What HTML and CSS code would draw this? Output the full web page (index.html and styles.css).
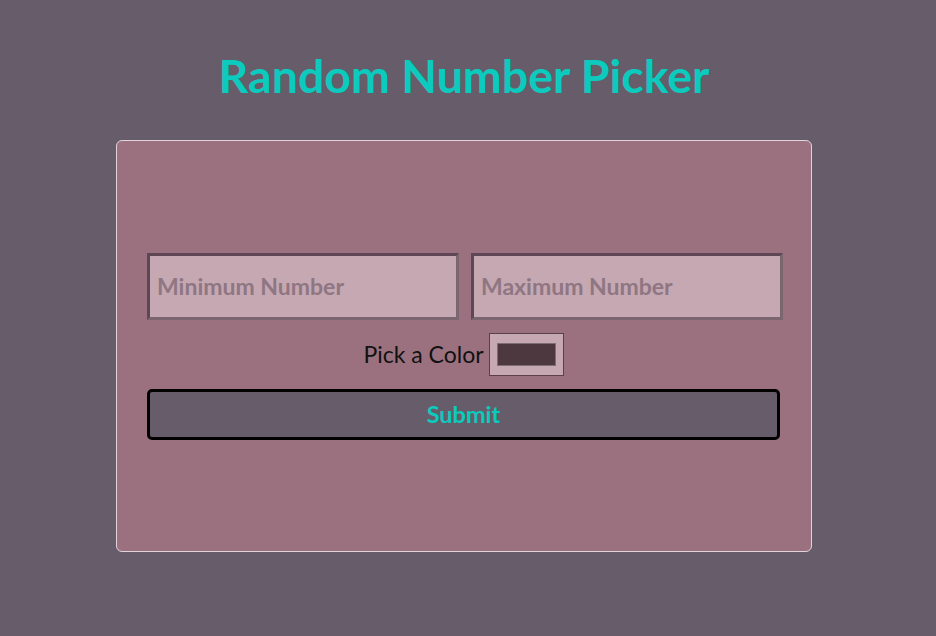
FILE: index.html
```html
<!DOCTYPE html>
<html>
<head>
<meta charset="utf-8">
<link rel="stylesheet" href="styles.css">
</head>
<body>
<h1 class="title">Random Number Picker</h1>
<div class="card">
  <form class="form">
    <div class="inputs">
      <input class="num" type="text" placeholder="Minimum Number">
      <input class="num" type="text" placeholder="Maximum Number">
    </div>
    <div class="color-row">
      <label class="color-label" for="c">Pick a Color</label>
      <input class="color" id="c" type="color" value="#4e3840">
    </div>
    <button class="submit" type="button">Submit</button>
  </form>
</div>
</body>
</html>
```
FILE: styles.css
```css
* { box-sizing: border-box; }
html { background: #675c69; }
body {
  margin: 0;
  width: 928px;
  background: #675c69;
  font-family: Lato, "Open Sans", sans-serif;
  height: 636px;
  overflow: hidden;
}
.title {
  margin: 0;
  padding-top: 46px;
  text-align: center;
  color: #0ccabd;
  font-size: 46.5px;
  font-weight: 700;
  line-height: 58px;
}
.card {
  width: 696px;
  height: 412px;
  margin: 36px auto 0;
  background: #9b717f;
  border: 1px solid #e0d4dc;
  border-radius: 6px;
  padding: 0 31px 0 30px;
  display: flex;
  align-items: center;
}
.form {
  width: 100%;
  display: flex;
  flex-direction: column;
}
.inputs {
  display: flex;
  gap: 12px;
}
.num {
  flex: 1;
  height: 67px;
  background: #c6a8b3;
  border: 3px solid;
  border-color: #5e4654 #7b6670 #7b6670 #5e4654;
  padding: 0 7px;
  font-family: inherit;
  font-size: 23px;
  font-weight: 700;
  color: #8e7682;
  outline: none;
}
.num::placeholder { color: #8e7682; }
.color-row {
  display: flex;
  justify-content: center;
  align-items: center;
  gap: 5px;
  margin-top: 13px;
}
.color-label {
  font-size: 23px;
  color: #111;
}
.color {
  -webkit-appearance: none;
  appearance: none;
  width: 75px;
  height: 43px;
  background: #c6a8b3;
  border: 1px solid #5a3f4c;
  padding: 0;
  margin: 0;
}
.color::-webkit-color-swatch-wrapper { padding: 9px 7px; }
.color::-webkit-color-swatch { border: 1px solid #7d6d74; }
.submit {
  margin-top: 13px;
  height: 51px;
  background: #675c69;
  border: 3px solid #000;
  border-radius: 5px;
  color: #0ccabd;
  font-family: inherit;
  font-size: 23.5px;
  font-weight: 700;
}
```
